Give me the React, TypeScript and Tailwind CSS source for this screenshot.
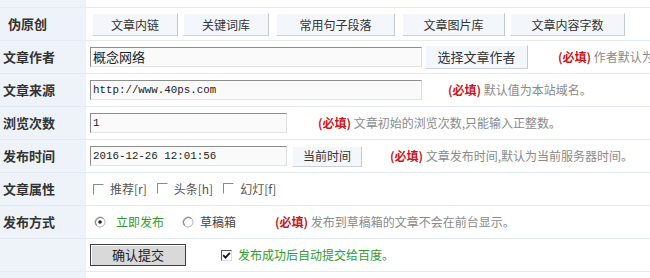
import React from 'react';

const CJK = "font-['SimSun','Noto_Sans_CJK_SC',sans-serif]";

function Row({ label, children, labelPad = 'pl-[3px]' }: { label?: string; children?: React.ReactNode; labelPad?: string }) {
  return (
    <div className="flex h-[33px] border-b border-[#e3eaf3]">
      <div className={`w-[86px] shrink-0 bg-[#eef3fa] flex items-center ${labelPad} text-[13px] font-bold text-[#333]`}>{label}</div>
      <div className="flex-1 flex items-center bg-white">{children}</div>
    </div>
  );
}

function Btn({ children, className = '' }: { children: React.ReactNode; className?: string }) {
  return (
    <div
      className={`h-[23px] flex items-center justify-center text-[12px] text-[#333] bg-[#f3f6fa] border border-t-white border-l-white border-r-[#c3c8d0] border-b-[#cdd2da] ${className}`}
    >
      {children}
    </div>
  );
}

function Field({ value, w, mono = false }: { value: string; w: string; mono?: boolean }) {
  return (
    <div
      className={`h-[20px] ${w} flex items-center pl-[2px] bg-[#fafafa] border border-t-[#8d8d8d] border-l-[#8d8d8d] border-r-[#dedede] border-b-[#e4e4e4] text-[#222] ${
        mono ? "font-['Liberation_Mono',monospace] text-[10.8px]" : 'text-[13px]'
      }`}
    >
      {value}
    </div>
  );
}

function Hint({ text, className = '' }: { text: string; className?: string }) {
  return (
    <div className={`text-[12px] whitespace-nowrap ${className}`}>
      <span className="text-[#c8161d] font-bold">(必填)</span>
      <span className="text-[#8a8a8a]"> {text}</span>
    </div>
  );
}

function Box() {
  return <span className="inline-block w-[11px] h-[11px] bg-white border border-t-[#8a8a8a] border-l-[#8a8a8a] border-r-white border-b-white" />;
}

function Radio({ on }: { on?: boolean }) {
  return (
    <svg width="12" height="12" viewBox="0 0 12 12">
      <circle cx="6" cy="6" r="5" fill="#fff" stroke="#b5b5b5" />
      <path d="M2.5 9.5 A5 5 0 0 1 9.5 2.5" fill="none" stroke="#808080" />
      {on && <circle cx="6" cy="6" r="1.8" fill="#222" />}
    </svg>
  );
}

export default function App() {
  return (
    <div className={`w-[650px] h-[278px] overflow-hidden bg-white ${CJK}`}>
      <div className="flex h-[8px] border-b border-[#e3eaf3]">
        <div className="w-[86px] bg-[#eef3fa]" />
        <div className="flex-1" />
      </div>

      <Row label="伪原创" labelPad="pl-[8px]">
        <div className="flex items-center pl-[6px] gap-[5px] mt-[1px]">
          <Btn className="w-[86px]">文章内链</Btn>
          <Btn className="w-[86px]">关键词库</Btn>
          <Btn className="w-[119px] ml-[2px]">常用句子段落</Btn>
          <Btn className="w-[103px] ml-[2px]">文章图片库</Btn>
          <Btn className="w-[115px]">文章内容字数</Btn>
        </div>
      </Row>

      <Row label="文章作者">
        <div className="flex items-center pl-[4px]">
          <Field value="概念网络" w="w-[332px]" />
          <Btn className="w-[103px] ml-[3px] !h-[24px] text-[13px]">选择文章作者</Btn>
          <Hint text="作者默认为网站名称" className="ml-[30px]" />
        </div>
      </Row>

      <Row label="文章来源">
        <div className="flex items-center pl-[4px]">
          <Field value="http://www.40ps.com" w="w-[332px]" mono />
          <Hint text="默认值为本站域名。" className="ml-[26px]" />
        </div>
      </Row>

      <Row label="浏览次数">
        <div className="flex items-center pl-[4px]">
          <Field value="1" w="w-[197px]" mono />
          <Hint text="文章初始的浏览次数,只能输入正整数。" className="ml-[31px]" />
        </div>
      </Row>

      <Row label="发布时间">
        <div className="flex items-center pl-[4px]">
          <Field value="2016-12-26 12:01:56" w="w-[197px]" mono />
          <Btn className="w-[70px] ml-[5px] !h-[21px]">当前时间</Btn>
          <Hint text="文章发布时间,默认为当前服务器时间。" className="ml-[28px]" />
        </div>
      </Row>

      <Row label="文章属性">
        <div className="flex items-center pl-[7px] text-[12px] text-[#555]">
          <Box />
          <span className="ml-[6px]">推荐[r]</span>
          <span className="ml-[10px]"><Box /></span>
          <span className="ml-[6px]">头条[h]</span>
          <span className="ml-[10px]"><Box /></span>
          <span className="ml-[6px]">幻灯[f]</span>
        </div>
      </Row>

      <Row label="发布方式">
        <div className="flex items-center pl-[8px] text-[12px]">
          <Radio on />
          <span className="ml-[10px] text-[#2f9a2f]">立即发布</span>
          <span className="ml-[18px]"><Radio /></span>
          <span className="ml-[6px] text-[#444]">草稿箱</span>
          <Hint text="发布到草稿箱的文章不会在前台显示。" className="ml-[39px]" />
        </div>
      </Row>

      <Row>
        <div className="flex items-center pl-[4px]">
          <div className="w-[96px] h-[22px] flex items-center justify-center bg-[#d9d9d9] border border-[#3f3f3f] shadow-[inset_1px_1px_0_#fff] text-[13px] text-[#222]">
            确认提交
          </div>
          <span className="ml-[35px] w-[11px] h-[11px] bg-white border border-t-[#555] border-l-[#555] border-r-[#ddd] border-b-[#ddd] flex items-center justify-center">
            <svg width="9" height="9" viewBox="0 0 9 9">
              <path d="M1.2 4.2 L3.5 6.6 L7.8 1.8" fill="none" stroke="#111" strokeWidth="1.8" />
            </svg>
          </span>
          <span className="ml-[6px] text-[12px] text-[#2f9a2f]">发布成功后自动提交给百度。</span>
        </div>
      </Row>

      <div className="flex h-[6px]">
        <div className="w-[86px] bg-[#eef3fa]" />
        <div className="flex-1" />
      </div>
    </div>
  );
}
